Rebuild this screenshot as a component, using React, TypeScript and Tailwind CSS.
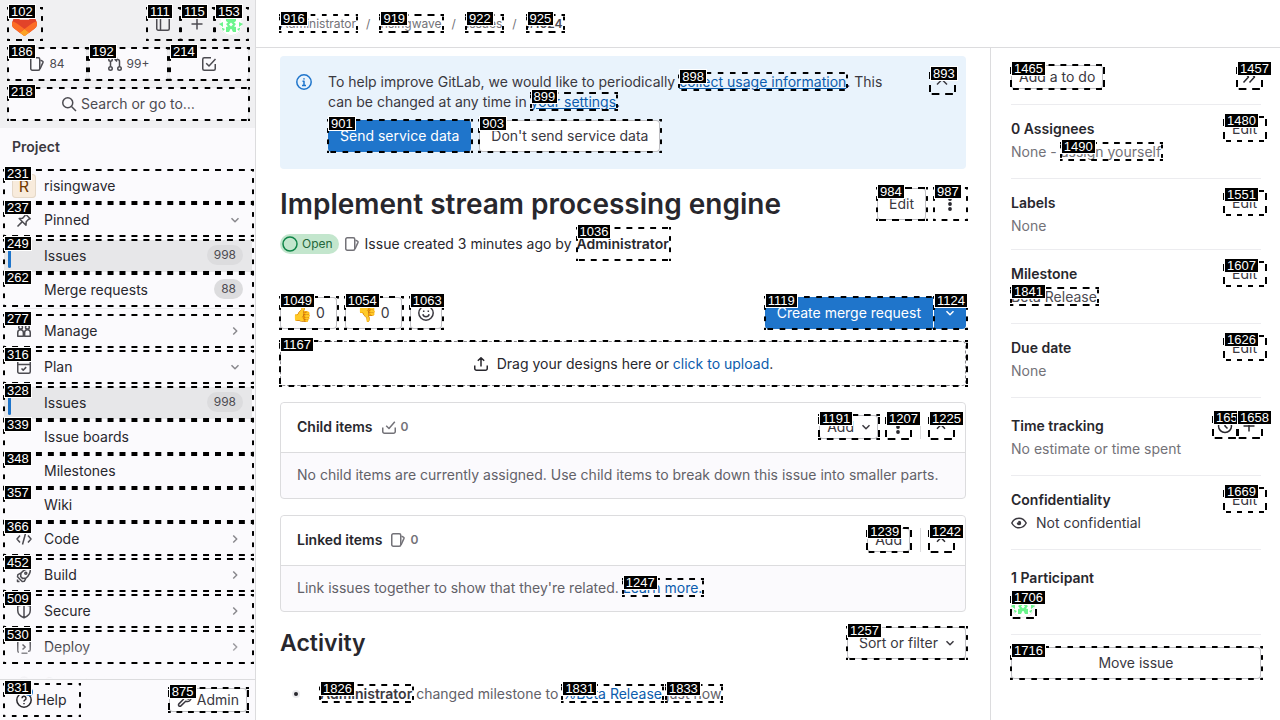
import React from "react";

type Kids = { children?: React.ReactNode };

/* Numbered outline drawn over an interactive element. The parent must be positioned. */
function Mark({ n }: { n: number }) {
  return (
    <span
      aria-hidden="true"
      className="pointer-events-none absolute -top-px -right-0.5 -bottom-px -left-px z-10 text-left [background:linear-gradient(90deg,#000_3px,transparent_3px_9px,#000_9px)_top/12px_2px_round_no-repeat,linear-gradient(90deg,#000_3px,transparent_3px_9px,#000_9px)_bottom/12px_2px_round_no-repeat,linear-gradient(#000_3px,transparent_3px_9px,#000_9px)_left/2px_12px_no-repeat_round,linear-gradient(#000_3px,transparent_3px_9px,#000_9px)_right/2px_12px_no-repeat_round]"
    >
      <span className="absolute -top-[3px] left-px border border-white bg-black px-[2px] font-['Liberation_Sans',sans-serif] text-[13px] leading-[13px] font-normal whitespace-nowrap text-white">
        {n}
      </span>
    </span>
  );
}

const ICONS: Record<string, React.ReactNode> = {
  sidebar: (
    <>
      <rect x="1.75" y="1.75" width="12.5" height="12.5" rx="1.5" />
      <path d="M5.5 2v12" />
    </>
  ),
  plus: <path d="M8 2.5v11M2.5 8h11" />,
  issues: (
    <>
      <rect x="1.75" y="1.75" width="9" height="12.5" rx="1.5" />
      <path d="M11.5 4.2l2 .9a1 1 0 0 1 .5 1.3l-3 6.6" />
    </>
  ),
  merge: (
    <>
      <circle cx="3.5" cy="12.5" r="1.75" />
      <circle cx="3.5" cy="3.5" r="1.75" />
      <circle cx="12.5" cy="12.5" r="1.75" />
      <path d="M3.5 5.5v5M12.5 10.5V5.5a2 2 0 0 0-2-2H8M10 1.5l-2 2 2 2" />
    </>
  ),
  todo: (
    <>
      <path d="M10 1.75H3.25a1.5 1.5 0 0 0-1.5 1.5v9.5a1.5 1.5 0 0 0 1.5 1.5h9.5a1.5 1.5 0 0 0 1.5-1.5V8" />
      <path d="M5.2 7.2L8 10l6.5-7" />
    </>
  ),
  search: (
    <>
      <circle cx="6.75" cy="6.75" r="5" />
      <path d="M10.5 10.5l4.5 4.5" />
    </>
  ),
  pin: (
    <path d="M1.5 14.5l4.6-4.6M9.2 1.8l5 5-1.6.4-2.4 2.5-.2 3.5L3.2 6.5l3.4-.2 2.3-2.6z" />
  ),
  users: (
    <>
      <circle cx="4.6" cy="4.2" r="1.9" />
      <circle cx="11.4" cy="4.2" r="1.9" />
      <path d="M1.75 13.25V9.5a2.8 2.8 0 0 1 5.6 0v3.75zM8.65 13.25V9.5a2.8 2.8 0 0 1 5.6 0v3.75z" />
    </>
  ),
  plan: (
    <>
      <rect x="1.75" y="1.75" width="12.5" height="12.5" rx="1.5" />
      <path d="M2 5.5h12M5.5 9.5l1.7 1.6 3-3" />
    </>
  ),
  code: <path d="M4 4.5L1 8l3 3.5M12 4.5L15 8l-3 3.5M9.5 2.5l-3 11" />,
  rocket: (
    <>
      <path d="M14.3 1.7c.3 4-1 6.6-4.3 9.3l-1.6 3.2-2.2.3-4.7-4.7.4-2.2L5.1 6c2.7-3.3 5.3-4.5 9.2-4.3zM5.1 6l-.5 3.5 1.9 1.9L10 11" />
      <circle cx="9.8" cy="6.2" r="1" />
      <path d="M1.5 12.5v2h2" />
    </>
  ),
  shield: <path d="M1.75 3L8 1.5 14.25 3v4.5c0 3.5-3 6-6.25 7.2C4.75 13.5 1.75 11 1.75 7.5zM8 1.7v12.8" />,
  deploy: (
    <>
      <path d="M3 13.25h-.2a1.5 1.5 0 0 1-1.05-1.5v-8a2 2 0 0 1 2-2h8.5a2 2 0 0 1 2 2v7a1.5 1.5 0 0 1-1.5 1.5H12M5.5 14.25h6" />
      <path d="M6.5 5.5L9.2 8l-2.7 2.5" />
    </>
  ),
  operate: <path d="M4 12a3 3 0 0 1-.5-6 4.6 4.6 0 0 1 9 0A3 3 0 0 1 12 12z" />,
  question: (
    <>
      <circle cx="8" cy="8" r="7.2" />
      <path d="M6 6.3a2 2 0 1 1 2.8 1.8c-.6.3-.8.6-.8 1.3" />
      <path d="M8 11v1.2" />
    </>
  ),
  wrench: (
    <path d="M9.8 1.9a3.8 3.8 0 0 0-3.3 5.4L1.9 11.9a1.3 1.3 0 0 0 2 2l4.8-4.7a3.9 3.9 0 0 0 5.5-4.2L11.9 7 9.5 6.2 9 4z" />
  ),
  info: (
    <>
      <circle cx="8" cy="8" r="7.2" />
      <path d="M6.5 7.25H8v4M6 11.5h4M8 4.2v1.3" />
    </>
  ),
  "chevron-down": <path d="M4.5 6.25L8 9.75l3.5-3.5" />,
  "chevron-up": <path d="M4 9.75L8 5.75l4 4" />,
  "chevron-up-large": <path d="M3 10.5L8 5.5l5 5" />,
  "chevron-right": <path d="M6.25 4.5L9.75 8l-3.5 3.5" />,
  smiley: (
    <>
      <circle cx="8" cy="8" r="7.2" />
      <path d="M4.8 9.3a3.3 3.3 0 0 0 6.4 0M5.7 5.5v1.6M10.3 5.5v1.6" />
    </>
  ),
  upload: <path d="M1.75 9.5v3a1.75 1.75 0 0 0 1.75 1.75h9a1.75 1.75 0 0 0 1.75-1.75v-3M8 10.5V2M4.8 4.8L8 1.7l3.2 3.1" />,
  task: <path d="M1.75 8.5v4a1.75 1.75 0 0 0 1.75 1.75h9a1.75 1.75 0 0 0 1.75-1.75v-4M5.2 6.8L8 9.5l5.8-6.7" />,
  double: <path d="M2.5 2.5L7.5 8l-5 5.5M8.5 2.5l5 5.5-5 5.5" />,
  clock: (
    <>
      <circle cx="8" cy="8" r="6.5" />
      <path d="M8 4.5V8l2.5 2.5" />
    </>
  ),
  eye: (
    <>
      <path d="M.8 8C2.5 4.8 5 3.2 8 3.2S13.5 4.8 15.2 8C13.5 11.2 11 12.8 8 12.8S2.5 11.2.8 8z" />
      <path d="M8 6.5A1.5 1.5 0 1 1 6.5 8.2L8 8z" fill="currentColor" />
    </>
  ),
};

function Icon({ name, className = "size-4" }: { name: string; className?: string }) {
  return (
    <svg
      viewBox="0 0 16 16"
      fill="none"
      stroke="currentColor"
      strokeWidth="1.5"
      strokeLinejoin="round"
      aria-hidden="true"
      className={`shrink-0 ${className}`}
    >
      {ICONS[name]}
    </svg>
  );
}

function Kebab() {
  return (
    <svg viewBox="0 0 16 16" fill="currentColor" aria-hidden="true" className="size-4 shrink-0">
      <circle cx="8" cy="3" r="1.9" />
      <circle cx="8" cy="8" r="1.9" />
      <circle cx="8" cy="13" r="1.9" />
    </svg>
  );
}

function Logo() {
  return (
    <svg viewBox="0 0 25 24" aria-hidden="true" className="h-6 w-[25px]">
      <path fill="#E24329" d="m24.507 9.5-.034-.09L21.082.562a.896.896 0 0 0-1.694.091l-2.29 7.01H7.825L5.535.653a.898.898 0 0 0-1.694-.09L.451 9.411.416 9.5a6.297 6.297 0 0 0 2.09 7.278l.012.01.03.022 5.16 3.867 2.56 1.935 1.554 1.176a1.051 1.051 0 0 0 1.268 0l1.555-1.176 2.56-1.935 5.197-3.89.014-.01A6.297 6.297 0 0 0 24.507 9.5Z" />
      <path fill="#FC6D26" d="m24.507 9.5-.034-.09a11.44 11.44 0 0 0-4.56 2.051l-7.447 5.632 4.742 3.584 5.197-3.89.014-.01A6.297 6.297 0 0 0 24.507 9.5Z" />
      <path fill="#FCA326" d="m7.707 20.677 2.56 1.935 1.555 1.176a1.051 1.051 0 0 0 1.268 0l1.555-1.176 2.56-1.935-4.743-3.584-4.755 3.584Z" />
      <path fill="#FC6D26" d="M5.01 11.461a11.43 11.43 0 0 0-4.56-2.05L.416 9.5a6.297 6.297 0 0 0 2.09 7.278l.012.01.03.022 5.16 3.867 4.745-3.584-7.444-5.632Z" />
    </svg>
  );
}

function Avatar() {
  return (
    <svg viewBox="0 0 24 24" aria-hidden="true" className="size-6 rounded-full bg-white">
      <g fill="#6cf58d">
        <path d="M7 5h4l1 2 1-2h4v4l-2 1.5L17 12l-2 2.5 2 .5v5h-3l-1.5-3h-1L10 20H7v-5l2-.5L7 12l2-1.5L7 9z" />
        <path d="M0 12l4-2v5zM24 12l-4-2v5zM2.5 15.5L6 17l-2 2zM21.5 15.5L18 17l2 2z" />
      </g>
      <path fill="#fff" d="M12 10.5l2 2-2 2-2-2z" />
      <circle cx="12" cy="12" r="11.5" fill="none" stroke="#000" strokeOpacity=".08" />
    </svg>
  );
}

function TopButton({ n, label, children }: Kids & { n: number; label: string }) {
  return (
    <button type="button" aria-label={label} className="relative flex size-8 items-center justify-center rounded">
      {children}
      <Mark n={n} />
    </button>
  );
}

function Counter({ n, icon, label, children }: Kids & { n: number; icon: string; label: string }) {
  return (
    <a
      href="#"
      aria-label={label}
      className="relative flex h-8 items-center justify-center gap-1 rounded bg-[#fbfafd] text-xs text-[#4c4b51] shadow-[0_0_1px_#bfbfc3]"
    >
      <Icon name={icon} />
      {children}
      <Mark n={n} />
    </a>
  );
}

type RowProps = {
  n?: number;
  label: string;
  icon?: React.ReactNode;
  count?: string;
  active?: boolean;
  open?: boolean;
  chevron?: boolean;
  gap?: boolean;
};

function NavRow({ n, label, icon, count, active, open, chevron, gap }: RowProps) {
  const cls = `relative flex h-8 w-full items-center gap-2 px-2 text-left text-[#28272d] ${active ? "bg-[#e7e7e9]" : ""}`;
  const inner = (
    <>
      {active && <span className="absolute top-2 bottom-1 left-1 w-[3px] rounded bg-[#1f75cb]" />}
      <span className="flex size-6 shrink-0 items-center justify-center text-[#4c4b51]">{icon}</span>
      <span className="grow">{label}</span>
      {count && (
        <span className="mr-px mb-0.5 rounded-full bg-[#dcdcde] px-[7px] text-xs leading-5 text-[#4c4b51]">{count}</span>
      )}
      {chevron && <Icon name={open ? "chevron-down" : "chevron-right"} className="mr-px size-4 text-[#89888d]" />}
      {n !== undefined && <Mark n={n} />}
    </>
  );
  return (
    <li className={gap ? "mb-1" : "mb-0.5"}>
      {chevron ? (
        <button type="button" aria-expanded={!!open} className={cls}>
          {inner}
        </button>
      ) : (
        <a href="#" className={cls}>
          {inner}
        </a>
      )}
    </li>
  );
}

function Sidebar() {
  return (
    <aside className="flex w-64 shrink-0 flex-col border-r border-[#dcdcde] bg-[#fbfafd]">
      <header className="flex h-32 shrink-0 flex-col gap-2 bg-[#f0f0f2] pt-2 pr-[7px] pl-2 text-[#4c4b51]">
        <div className="flex items-center gap-0.5 pr-px">
          <a href="#" aria-label="Homepage" className="relative mr-auto flex h-8 w-[33px] items-center justify-center">
            <Logo />
            <Mark n={102} />
          </a>
          <TopButton n={111} label="Hide sidebar">
            <Icon name="sidebar" />
          </TopButton>
          <TopButton n={115} label="Create new">
            <Icon name="plus" />
          </TopButton>
          <TopButton n={153} label="User menu">
            <Avatar />
          </TopButton>
        </div>
        <div className="grid grid-cols-3 gap-[3px]">
          <Counter n={186} icon="issues" label="Assigned issues">
            84
          </Counter>
          <Counter n={192} icon="merge" label="Merge requests">
            99+
          </Counter>
          <Counter n={214} icon="todo" label="To-Do List" />
        </div>
        <button
          type="button"
          className="relative flex h-8 items-center justify-center gap-1 rounded bg-[#fbfafd] shadow-[0_0_1px_#bfbfc3]"
        >
          <Icon name="search" />
          Search or go to…
          <Mark n={218} />
        </button>
      </header>
      <nav aria-label="Project" className="relative min-h-0 grow overflow-hidden pr-[3px] pl-1">
        <h2 className="px-2 pt-[9px] pb-[13px] font-semibold text-[#3a383f]">Project</h2>
        <ul>
          <NavRow
            n={231}
            label="risingwave"
            icon={
              <span className="flex size-6 items-center justify-center rounded bg-[#f8ebdc] text-base text-[#703800] shadow-[inset_0_0_0_1px_#e5d8c8]">
                R
              </span>
            }
          />
          <NavRow n={237} label="Pinned" icon={<Icon name="pin" />} chevron open gap />
          <NavRow n={249} label="Issues" count="998" active />
          <NavRow n={262} label="Merge requests" count="88" />
        </ul>
        <hr className="mx-3 mt-px mb-[6px] border-[#ececef]" />
        <ul>
          <NavRow n={277} label="Manage" icon={<Icon name="users" />} chevron gap />
          <NavRow n={316} label="Plan" icon={<Icon name="plan" />} chevron open gap />
          <NavRow n={328} label="Issues" count="998" active />
          <NavRow n={339} label="Issue boards" />
          <NavRow n={348} label="Milestones" />
          <NavRow n={357} label="Wiki" />
          <NavRow n={366} label="Code" icon={<Icon name="code" />} chevron gap />
          <NavRow n={452} label="Build" icon={<Icon name="rocket" />} chevron gap />
          <NavRow n={509} label="Secure" icon={<Icon name="shield" />} chevron gap />
          <NavRow n={530} label="Deploy" icon={<Icon name="deploy" />} chevron gap />
          <NavRow label="Operate" icon={<Icon name="operate" />} chevron gap />
        </ul>
        <div className="pointer-events-none absolute inset-x-0 bottom-0 h-10 bg-linear-to-b from-[#fbfafd]/0 to-[#fbfafd]" />
      </nav>
      <footer className="flex h-[41px] shrink-0 items-center justify-between border-t border-[#dcdcde] pr-2 pl-1">
        <button type="button" className="relative flex h-8 items-center gap-1 px-3">
          <Icon name="question" />
          Help
          <span className="absolute top-1 left-[21px] size-2 rounded-full bg-[#1f75cb]" />
          <Mark n={831} />
        </button>
        <a
          href="#"
          className="relative flex h-6 items-center gap-1 rounded bg-white px-2 text-[#3a383f] shadow-[inset_0_0_0_1px_#bfbfc3]"
        >
          <Icon name="wrench" />
          Admin
          <Mark n={875} />
        </a>
      </footer>
    </aside>
  );
}

function TextLink({ n, className = "", children }: Kids & { n: number; className?: string }) {
  return (
    <a href="#" className={`relative inline-block leading-[17px] ${className}`}>
      {children}
      <Mark n={n} />
    </a>
  );
}

function Breadcrumbs() {
  return (
    <nav
      aria-label="Breadcrumbs"
      className="flex h-12 shrink-0 items-center gap-2.5 border-b border-[#dcdcde] px-6 text-xs text-[#737278]"
    >
      <TextLink n={916}>Administrator</TextLink>
      <span>/</span>
      <TextLink n={919}>risingwave</TextLink>
      <span>/</span>
      <TextLink n={922}>Issues</TextLink>
      <span>/</span>
      <TextLink n={925} className="font-semibold text-[#4c4b51]">
        #1024
      </TextLink>
    </nav>
  );
}

const OUTLINE = "bg-white text-[#3a383f] shadow-[inset_0_0_0_1px_#bfbfc3]";
const BLUE = "bg-[#1f75cb] text-white";

function Button({
  n,
  label,
  className,
  children,
}: Kids & { n: number; label?: string; className: string }) {
  return (
    <button
      type="button"
      aria-label={label}
      className={`relative flex shrink-0 items-center justify-center whitespace-nowrap ${className}`}
    >
      {children}
      <Mark n={n} />
    </button>
  );
}

function Alert() {
  return (
    <section className="flex rounded bg-[#e9f3fc] px-4 pt-4 pb-[17px] text-[#3a383f]">
      <Icon name="info" className="mt-0.5 mr-4 size-4 text-[#1f75cb]" />
      <div className="min-w-0 grow pr-6">
        <p>
          To help improve GitLab, we would like to periodically{" "}
          <TextLink n={898} className="text-[#0b5cad] underline">
            collect usage information
          </TextLink>
          . This can be changed at any time in{" "}
          <TextLink n={899} className="text-[#0b5cad] underline">
            your settings
          </TextLink>
          .
        </p>
        <div className="mt-2 flex gap-2">
          <Button n={901} className={`h-8 rounded px-3 ${BLUE}`}>
            Send service data
          </Button>
          <Button n={903} className={`h-8 rounded px-3 ${OUTLINE}`}>
            Don't send service data
          </Button>
        </div>
      </div>
      <Button n={893} label="Collapse" className="-mt-0.5 -mr-1 size-6">
        <Icon name="chevron-up-large" />
      </Button>
    </section>
  );
}

function Card({
  title,
  icon,
  actions,
  toggle,
  children,
}: Kids & { title: string; icon: string; actions: React.ReactNode; toggle: number }) {
  return (
    <section className="mt-4 rounded border border-[#dcdcde] bg-[#fbfafd]">
      <header className="flex h-[50px] items-center rounded-t border-b border-[#dcdcde] bg-white pr-3 pb-0.5 pl-4">
        <h2 className="font-semibold">{title}</h2>
        <span className="ml-2 flex grow items-center gap-1 text-xs font-semibold text-[#737278]">
          <Icon name={icon} />0
        </span>
        {actions}
        <span className="mr-2 ml-2.5 h-6 w-px bg-[#dcdcde]" />
        <Button n={toggle} label="Collapse" className="size-6">
          <Icon name="chevron-up" />
        </Button>
      </header>
      <p className="px-4 pt-3 pb-[13px] text-[#626168]">{children}</p>
    </section>
  );
}

function IssueMain() {
  return (
    <main className="min-w-0 grow overflow-hidden pt-2 pr-6 pl-6">
      <Alert />
      <div className="mt-[19px] flex items-center gap-2">
        <h1 className="grow text-[28px] leading-8 font-semibold">Implement stream processing engine</h1>
        <Button n={984} className={`h-8 rounded px-3 ${OUTLINE}`}>
          Edit
        </Button>
        <Button n={987} label="More actions" className="size-8">
          <Kebab />
        </Button>
      </div>
      <div className="mt-2 flex h-8 items-center gap-[5px]">
        <span className="flex h-5 items-center gap-1 rounded-full bg-[#c3e6cd] pr-1.5 pl-0.5 text-xs text-[#24663b]">
          <svg viewBox="0 0 16 16" aria-hidden="true" className="size-4">
            <circle cx="8" cy="8" r="7" fill="none" stroke="#108548" strokeWidth="1.5" />
          </svg>
          Open
        </span>
        <Icon name="issues" className="size-4 text-[#737278]" />
        <span>
          Issue created <time>3 minutes ago</time> by
        </span>
        <a href="#" className="relative flex h-8 items-center font-semibold">
          Administrator
          <Mark n={1036} />
        </a>
      </div>
      <div className="mt-[37px] flex">
        <Button n={1049} label="Thumbs up" className={`mr-2 h-8 gap-1 rounded px-3 ${OUTLINE}`}>
          <span className="text-base leading-none">👍</span>0
        </Button>
        <Button n={1054} label="Thumbs down" className={`mr-2 h-8 gap-1 rounded px-3 ${OUTLINE}`}>
          <span className="text-base leading-none">👎</span>0
        </Button>
        <Button n={1063} label="Add reaction" className={`mr-auto size-8 rounded ${OUTLINE}`}>
          <Icon name="smiley" />
        </Button>
        <Button n={1119} className={`mr-px h-8 rounded-l px-3 ${BLUE}`}>
          Create merge request
        </Button>
        <Button n={1124} label="Options" className={`size-8 rounded-r ${BLUE}`}>
          <Icon name="chevron-down" />
        </Button>
      </div>
      <div className="relative mt-3 flex h-[45px] items-center justify-center gap-2 rounded outline-1 -outline-offset-1 outline-[#89888d] outline-dashed">
        <Icon name="upload" />
        <p>
          Drag your designs here or{" "}
          <a href="#" className="text-[#0b5cad]">
            click to upload
          </a>
          .
        </p>
        <Mark n={1167} />
      </div>
      <Card
        title="Child items"
        icon="task"
        toggle={1225}
        actions={
          <>
            <Button n={1191} className={`mr-2 h-6 gap-1 rounded pr-1 pl-2 ${OUTLINE}`}>
              Add
              <Icon name="chevron-down" />
            </Button>
            <Button n={1207} label="More actions" className="size-6">
              <Kebab />
            </Button>
          </>
        }
      >
        No child items are currently assigned. Use child items to break down this issue into smaller parts.
      </Card>
      <Card
        title="Linked items"
        icon="issues"
        toggle={1242}
        actions={
          <Button n={1239} className={`h-6 rounded px-2 ${OUTLINE}`}>
            Add
          </Button>
        }
      >
        Link issues together to show that they're related.{" "}
        <TextLink n={1247} className="text-[#0b5cad]">
          Learn more.
        </TextLink>
      </Card>
      <div className="mt-[15px] flex items-center justify-between">
        <h2 className="text-[23px] leading-8 font-semibold">Activity</h2>
        <Button n={1257} className={`h-8 gap-1 rounded pr-2 pl-3 ${OUTLINE}`}>
          Sort or filter
          <Icon name="chevron-down" />
        </Button>
      </div>
      <ul className="mt-[25px]">
        <li className="flex items-center text-[#626168]">
          <span className="mr-5 ml-3 flex size-2 items-center justify-center rounded-full bg-[#ececef]">
            <span className="size-1 rounded-full bg-[#28272d]" />
          </span>
          <p>
            <TextLink n={1826} className="font-semibold text-[#3a383f]">
              Administrator
            </TextLink>{" "}
            changed milestone to{" "}
            <TextLink n={1831} className="text-[#0b5cad]">
              %Beta Release
            </TextLink>{" "}
            <TextLink n={1833}>just now</TextLink>
          </p>
        </li>
      </ul>
    </main>
  );
}

function Block({
  title,
  edit,
  actions,
  className = "pt-3 pb-4",
  children,
}: Kids & { title: string; edit?: number; actions?: React.ReactNode; className?: string }) {
  return (
    <section className={`border-b border-[#ececef] ${className}`}>
      <div className="mb-px flex h-6 items-center justify-between">
        <h3 className="font-semibold">{title}</h3>
        {edit !== undefined && (
          <Button n={edit} className="-mr-1 h-6 px-2 text-[#3a383f]">
            Edit
          </Button>
        )}
        {actions}
      </div>
      <div className="text-[#737278]">{children}</div>
    </section>
  );
}

function IssueSidebar() {
  return (
    <aside className="w-[290px] shrink-0 overflow-hidden border-l border-[#dcdcde] pr-[19px] pl-5">
      <div className="flex items-center justify-between border-b border-[#ececef] pt-[17px] pb-[15px]">
        <Button n={1465} className={`h-6 rounded px-2 ${OUTLINE}`}>
          Add a to do
        </Button>
        <Button n={1457} label="Collapse sidebar" className="size-6">
          <Icon name="double" />
        </Button>
      </div>
      <Block title="0 Assignees" edit={1480}>
        None - <TextLink n={1490}>assign yourself</TextLink>
      </Block>
      <Block title="Labels" edit={1551} className="pt-3 pb-[13px]">
        None
      </Block>
      <Block title="Milestone" edit={1607}>
        <TextLink n={1841} className="text-[#4c4b51]">
          Beta Release
        </TextLink>
      </Block>
      <Block title="Due date" edit={1626}>
        None
      </Block>
      <Block
        title="Time tracking"
        className="py-4"
        actions={
          <div className="flex">
            <Button n={1657} label="Time tracking report" className="size-6">
              <Icon name="clock" />
            </Button>
            <Button n={1658} label="Add time entry" className="size-6">
              <Icon name="plus" />
            </Button>
          </div>
        }
      >
        No estimate or time spent
      </Block>
      <Block title="Confidentiality" edit={1669}>
        <span className="flex items-center gap-[9px] text-[#3a383f]">
          <Icon name="eye" />
          Not confidential
        </span>
      </Block>
      <Block title="1 Participant" className="py-4">
        <a href="#" aria-label="Administrator" className="relative mt-1 flex size-6">
          <Avatar />
          <Mark n={1706} />
        </a>
      </Block>
      <Button n={1716} className={`mt-3 h-8 w-full rounded ${OUTLINE}`}>
        Move issue
      </Button>
    </aside>
  );
}

export default function App() {
  return (
    <div className="flex h-screen overflow-hidden bg-white font-['Inter',sans-serif] text-sm leading-5 text-[#28272d]">
      <Sidebar />
      <div className="flex min-w-0 grow flex-col">
        <Breadcrumbs />
        <div className="flex min-h-0 grow">
          <IssueMain />
          <IssueSidebar />
        </div>
      </div>
    </div>
  );
}
